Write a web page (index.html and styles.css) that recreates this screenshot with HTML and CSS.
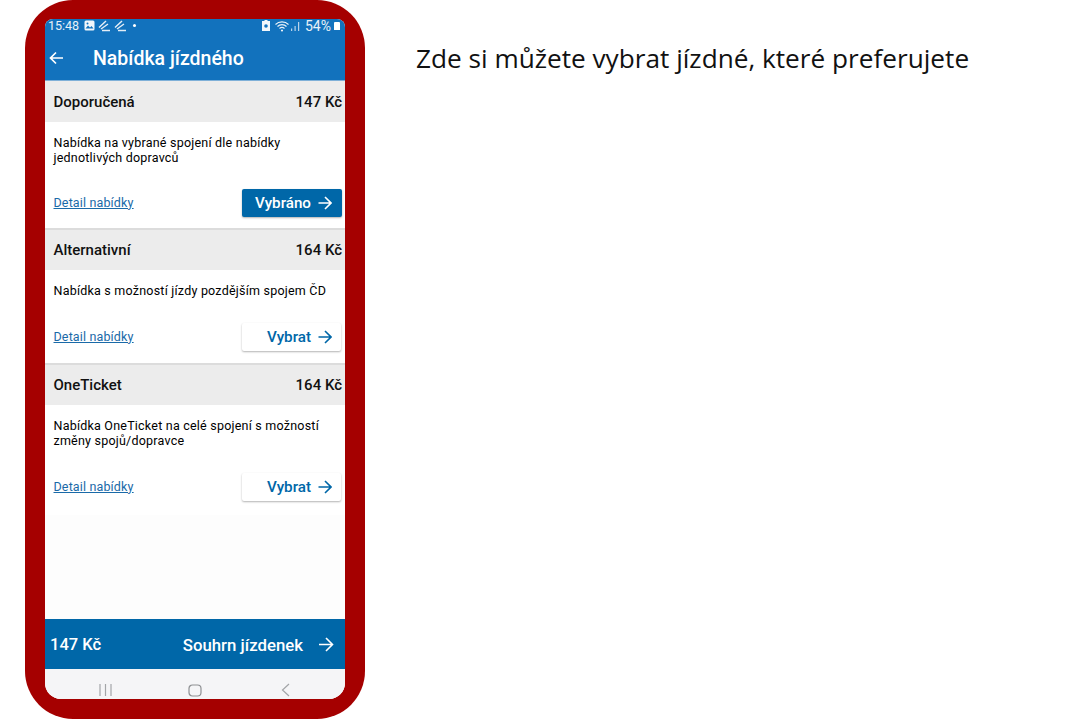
FILE: index.html
```html
<!DOCTYPE html>
<html lang="cs">
<head>
  <meta charset="UTF-8" />
  <title>Nabídka jízdného</title>
  <link rel="stylesheet" href="styles.css">
</head>
<body>
  <div class="phone">
    <div class="screen">
      <div class="top-blue">
        <div class="statusbar">
          <span class="clock">15:48</span>
          <svg class="st-pic" width="11" height="11" viewBox="0 0 11 11"><rect x="0.500" y="0.500" width="10" height="10" rx="1.500" fill="#f2f7fb"/><path d="M1.500 8.500l2.500-3 2 2 1.500-1.500 2 2.500z" fill="#1272bd"/><circle cx="3.500" cy="3.500" r="1" fill="#1272bd"/></svg>
          <svg class="st-wing" width="13" height="12" viewBox="0 0 13 12"><path d="M1 7.500L8 1M3 9L10 4M4 10.500h8" stroke="#e3edf6" stroke-width="1.500" fill="none"/></svg>
          <svg class="st-wing" width="13" height="12" viewBox="0 0 13 12"><path d="M1 7.500L8 1M3 9L10 4M4 10.500h8" stroke="#e3edf6" stroke-width="1.500" fill="none"/></svg>
          <span class="dot"></span>
          <span class="status-right">
            <svg width="8" height="11" viewBox="0 0 8 11"><path d="M2.500 0h3v1H8v10H0V1h2.500z" fill="#f2f7fb"/><circle cx="4" cy="6" r="1.800" fill="#1272bd"/></svg>
            <svg class="st-wifi" width="14" height="12" viewBox="0 0 14 12"><path d="M.5 4.500C4 1 10 1 13.500 4.500M2.500 6.500C5 4 9 4 11.500 6.500M4.500 8.500c1.500-1.300 3.500-1.300 5 0" stroke="#eaf2f8" stroke-width="1.100" fill="none"/><circle cx="7" cy="10.500" r="1.100" fill="#eaf2f8"/></svg>
            <svg width="9" height="10" viewBox="0 0 9 10"><path d="M0 7.500h1.200V10H0zM3.500 5h1.200v5H3.500zM7 1h1.200v9H7z" fill="#b9d3ea"/></svg>
            <span class="battery-text">54%</span>
            <span class="battery"></span>
          </span>
        </div>
        <header class="appbar">
          <svg class="back" width="15" height="14" viewBox="0 0 15 14"><path d="M14 7H1.500M7 1.500L1.500 7 7 12.500" stroke="#fff" stroke-width="1.700" fill="none"/></svg>
          <h1>Nabídka jízdného</h1>
        </header>
      </div>

      <main class="offers">
        <section class="offer offer-tall">
          <div class="offer-head"><span>Doporučená</span><b>147 Kč</b></div>
          <div class="offer-body">
            <p>Nabídka na vybrané spojení dle nabídky<br>jednotlivých dopravců</p>
            <div class="offer-actions">
              <a class="detail" href="#">Detail nabídky</a>
              <button class="btn btn-selected">Vybráno
                <svg width="14" height="14" viewBox="0 0 14 14"><path d="M.5 7h12.500M7 1l6 6-6 6" stroke="currentColor" stroke-width="1.600" fill="none"/></svg>
              </button>
            </div>
          </div>
        </section>
        <section class="offer offer-short">
          <div class="offer-head"><span>Alternativní</span><b>164 Kč</b></div>
          <div class="offer-body">
            <p>Nabídka s možností jízdy pozdějším spojem ČD</p>
            <div class="offer-actions">
              <a class="detail" href="#">Detail nabídky</a>
              <button class="btn">Vybrat
                <svg width="14" height="14" viewBox="0 0 14 14"><path d="M.5 7h12.500M7 1l6 6-6 6" stroke="currentColor" stroke-width="1.600" fill="none"/></svg>
              </button>
            </div>
          </div>
        </section>
        <section class="offer offer-last">
          <div class="offer-head"><span>OneTicket</span><b>164 Kč</b></div>
          <div class="offer-body">
            <p>Nabídka OneTicket na celé spojení s možností<br>změny spojů/dopravce</p>
            <div class="offer-actions">
              <a class="detail" href="#">Detail nabídky</a>
              <button class="btn">Vybrat
                <svg width="14" height="14" viewBox="0 0 14 14"><path d="M.5 7h12.500M7 1l6 6-6 6" stroke="currentColor" stroke-width="1.600" fill="none"/></svg>
              </button>
            </div>
          </div>
        </section>
      </main>

      <div class="summary">
        <span class="summary-price">147 Kč</span>
        <span class="summary-link">Souhrn jízdenek
          <svg width="16" height="15" viewBox="0 0 16 15"><path d="M1 7.500h13.500M8 1l6.500 6.500L8 14" stroke="#fff" stroke-width="1.600" fill="none"/></svg>
        </span>
      </div>

      <nav class="android-nav">
        <svg width="13" height="12" viewBox="0 0 13 12"><path d="M1 0v12M6.500 0v12M12 0v12" stroke="#a3a5a8" stroke-width="1.200"/></svg>
        <svg class="nav-home" width="14" height="13" viewBox="0 0 14 13"><rect x="1" y="1" width="12" height="11" rx="3.500" fill="none" stroke="#8f9194" stroke-width="1.200"/></svg>
        <svg width="9" height="14" viewBox="0 0 9 14"><path d="M8 1L1.500 7 8 13" fill="none" stroke="#a3a5a8" stroke-width="1.200"/></svg>
      </nav>
    </div>
  </div>

  <p class="caption">Zde si můžete vybrat jízdné, které preferujete</p>
</body>
</html>
```

FILE: styles.css
```css
:root {
  --blue: #1272bd;
  --dark-blue: #0067a8;
  --frame: #a50000;
}

* {
  box-sizing: border-box;
}

html,
body {
  height: 720px;
}

body {
  margin: 0;
  padding-left: 25px;
  display: flex;
  align-items: flex-start;
  gap: 51px;
  background: #fff;
  overflow: hidden;
  font-family: Roboto, sans-serif;
  color: #111;
}

.phone {
  width: 340px;
  height: 719px;
  flex: none;
  padding: 19px 20px 20px;
  background: var(--frame);
  border-radius: 48px;
}

.screen {
  height: 680px;
  display: flex;
  flex-direction: column;
  background: #fdfdfd;
  border-radius: 8px 8px 16px 16px;
  overflow: hidden;
}

.top-blue {
  height: 62px;
  flex: none;
  background: var(--blue);
  color: #fff;
  border-bottom: 1px solid #7fb0d8;
}

.statusbar {
  height: 13px;
  padding: 0 5px 0 3px;
  display: flex;
  align-items: center;
  font-size: 12.5px;
  color: #e8f1f8;
}

.st-pic {
  margin-left: 5px;
}

.st-wing {
  margin-left: 3px;
}

.dot {
  width: 3px;
  height: 3px;
  margin-left: 6px;
  border-radius: 50%;
  background: #fff;
}

.status-right {
  margin-left: auto;
  display: flex;
  align-items: center;
  gap: 1px;
}

.st-wifi {
  margin: 0 1px 0 4px;
}

.battery-text {
  margin-left: 4px;
  font-size: 14px;
}

.battery {
  width: 6px;
  height: 8px;
  margin-left: 2px;
  border-radius: 1px 1px 0 0;
  background: #fff;
}

.appbar {
  height: 48px;
  padding: 4px 0 0 4px;
  display: flex;
  align-items: center;
}

.back {
  flex: none;
}

.appbar h1 {
  margin: 0 0 0 29px;
  font-size: 19.5px;
  font-weight: 500;
}

.offers {
  flex: 1;
}

.offer {
  background: #fff;
  border-bottom: 2px solid #dcdcdc;
}

.offer-tall {
  height: 149px;
}

.offer-short {
  height: 135px;
}

.offer-last {
  height: 150px;
  border-bottom: 0;
}

.offer-head {
  height: 40px;
  padding: 0 3px 0 8.5px;
  display: flex;
  align-items: center;
  justify-content: space-between;
  background: #ececec;
  font-size: 15px;
  font-weight: 500;
}

.offer-tall .offer-head {
  height: 41px;
}

.offer-head b {
  font-weight: 500;
}

.offer-body {
  padding: 13px 3px 0 8.5px;
}

.offer-body p {
  margin: 0;
  height: 37px;
  font-size: 12.5px;
  font-weight: 400;
  line-height: 15px;
  letter-spacing: 0.22px;
  color: #000;
}

.offer-actions {
  margin-top: 18px;
  display: flex;
  align-items: center;
  justify-content: space-between;
}

.offer-tall .offer-body p {
  height: 36px;
}

.offer-short .offer-body p {
  height: 22px;
}

.detail {
  padding-bottom: 2px;
  color: #1a6aa8;
  font-size: 12.5px;
  font-weight: 400;
  letter-spacing: 0.15px;
}

.btn {
  width: 99px;
  height: 28px;
  margin-right: 1px;
  padding: 0 9px 0 0;
  display: flex;
  align-items: center;
  justify-content: flex-end;
  gap: 7px;
  border: 0;
  border-radius: 2px;
  background: #fff;
  box-shadow: 0 1px 2px rgba(0, 0, 0, 0.3);
  color: var(--dark-blue);
  font-family: inherit;
  font-size: 15.2px;
  font-weight: 500;
}

.btn-selected {
  width: 100px;
  margin-right: 0;
  padding-right: 10px;
  background: var(--dark-blue);
  color: #fff;
}

.summary {
  height: 50px;
  flex: none;
  padding: 1px 11px 0 5px;
  display: flex;
  align-items: center;
  justify-content: space-between;
  background: var(--dark-blue);
  color: #fff;
  font-size: 16.5px;
  font-weight: 500;
}

.summary-link {
  display: flex;
  align-items: center;
  gap: 15px;
  font-size: 16.8px;
}

.android-nav {
  height: 30px;
  flex: none;
  padding: 12px 55px 0 54px;
  display: flex;
  align-items: center;
  justify-content: space-between;
  background: #f5f5f7;
}

.nav-home {
  margin-right: 3px;
}

.caption {
  margin: 41px 0 0;
  font-family: "Open Sans", sans-serif;
  font-size: 26.2px;
  line-height: 34px;
  color: #111;
  white-space: nowrap;
}
```
